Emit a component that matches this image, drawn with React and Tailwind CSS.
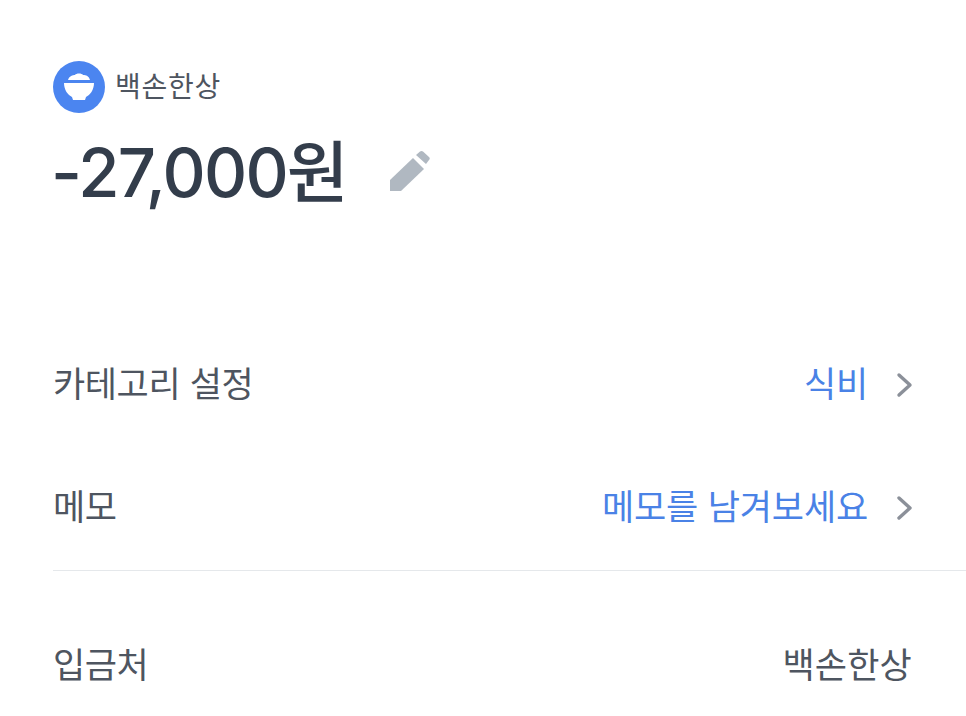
import React from 'react';

const fontStack = "font-['Inter','Noto_Sans_CJK_KR',sans-serif]";

const Chevron = () => (
  <svg width="18" height="26" viewBox="0 0 18 26" fill="none" className="ml-[27px]">
    <path d="M4 3L15 13L4 23" stroke="#8b9099" strokeWidth="3.4" strokeLinecap="round" strokeLinejoin="round" />
  </svg>
);

const Row = ({ label, value }) => (
  <div className="flex items-center justify-between h-[123px]">
    <span className="text-[35px] text-[#4e5560] tracking-[-0.4px]">{label}</span>
    <div className="flex items-center">
      <span className="text-[35px] text-[#4a82e6] tracking-[-0.15px]">{value}</span>
      <Chevron />
    </div>
  </div>
);

export default function App() {
  return (
    <div className={`${fontStack} w-[966px] h-[716px] overflow-hidden bg-white pl-[53px] pt-[60px]`}>
      <div className="flex items-center h-[54px]">
        <div className="w-[52px] h-[52px] rounded-full bg-[#4b85f0] flex items-center justify-center">
          <svg width="38" height="36" viewBox="0 0 38 36">
            <path d="M8 11C9 7 13 6 15 6C16 4 22 4 23 6C26 6 29 7 30 11Z" fill="#fff" />
            <path d="M4 14H34C34 21 30 26 26 28L25 31H13L12 28C8 26 4 21 4 14Z" fill="#fff" />
          </svg>
        </div>
        <span className="ml-[10px] text-[28px] text-[#4e5560] tracking-[0.7px]">백손한상</span>
      </div>
      <div className="flex items-center h-[80px] mt-[18px] -ml-[2px]">
        <span className="text-[67px] leading-none font-medium text-[#333d4b] tracking-[-1.8px]">-27,000원</span>
        <svg width="44" height="44" viewBox="0 0 44 44" className="ml-[41px]">
          <path d="M2 41V30L25 8L36 19L13 41Z" fill="#b0b8c1" />
          <path d="M28 5L32 1.5C33 0.7 34 0.7 35 1.5L41 7C42 8 42 9 41 10L38 14Z" fill="#b0b8c1" />
        </svg>
      </div>
      <div className="mt-[111px] pr-[53px]">
        <Row label="카테고리 설정" value="식비" />
        <Row label="메모" value="메모를 남겨보세요" />
      </div>
      <div className="h-px bg-[#e5e8eb] mt-px" />
      <div className="flex items-center justify-between h-[189px] pr-[54px]">
        <span className="text-[35px] text-[#4e5560] tracking-[-0.4px]">입금처</span>
        <span className="text-[35px] text-[#4e5560] tracking-[0.2px]">백손한상</span>
      </div>
    </div>
  );
}
